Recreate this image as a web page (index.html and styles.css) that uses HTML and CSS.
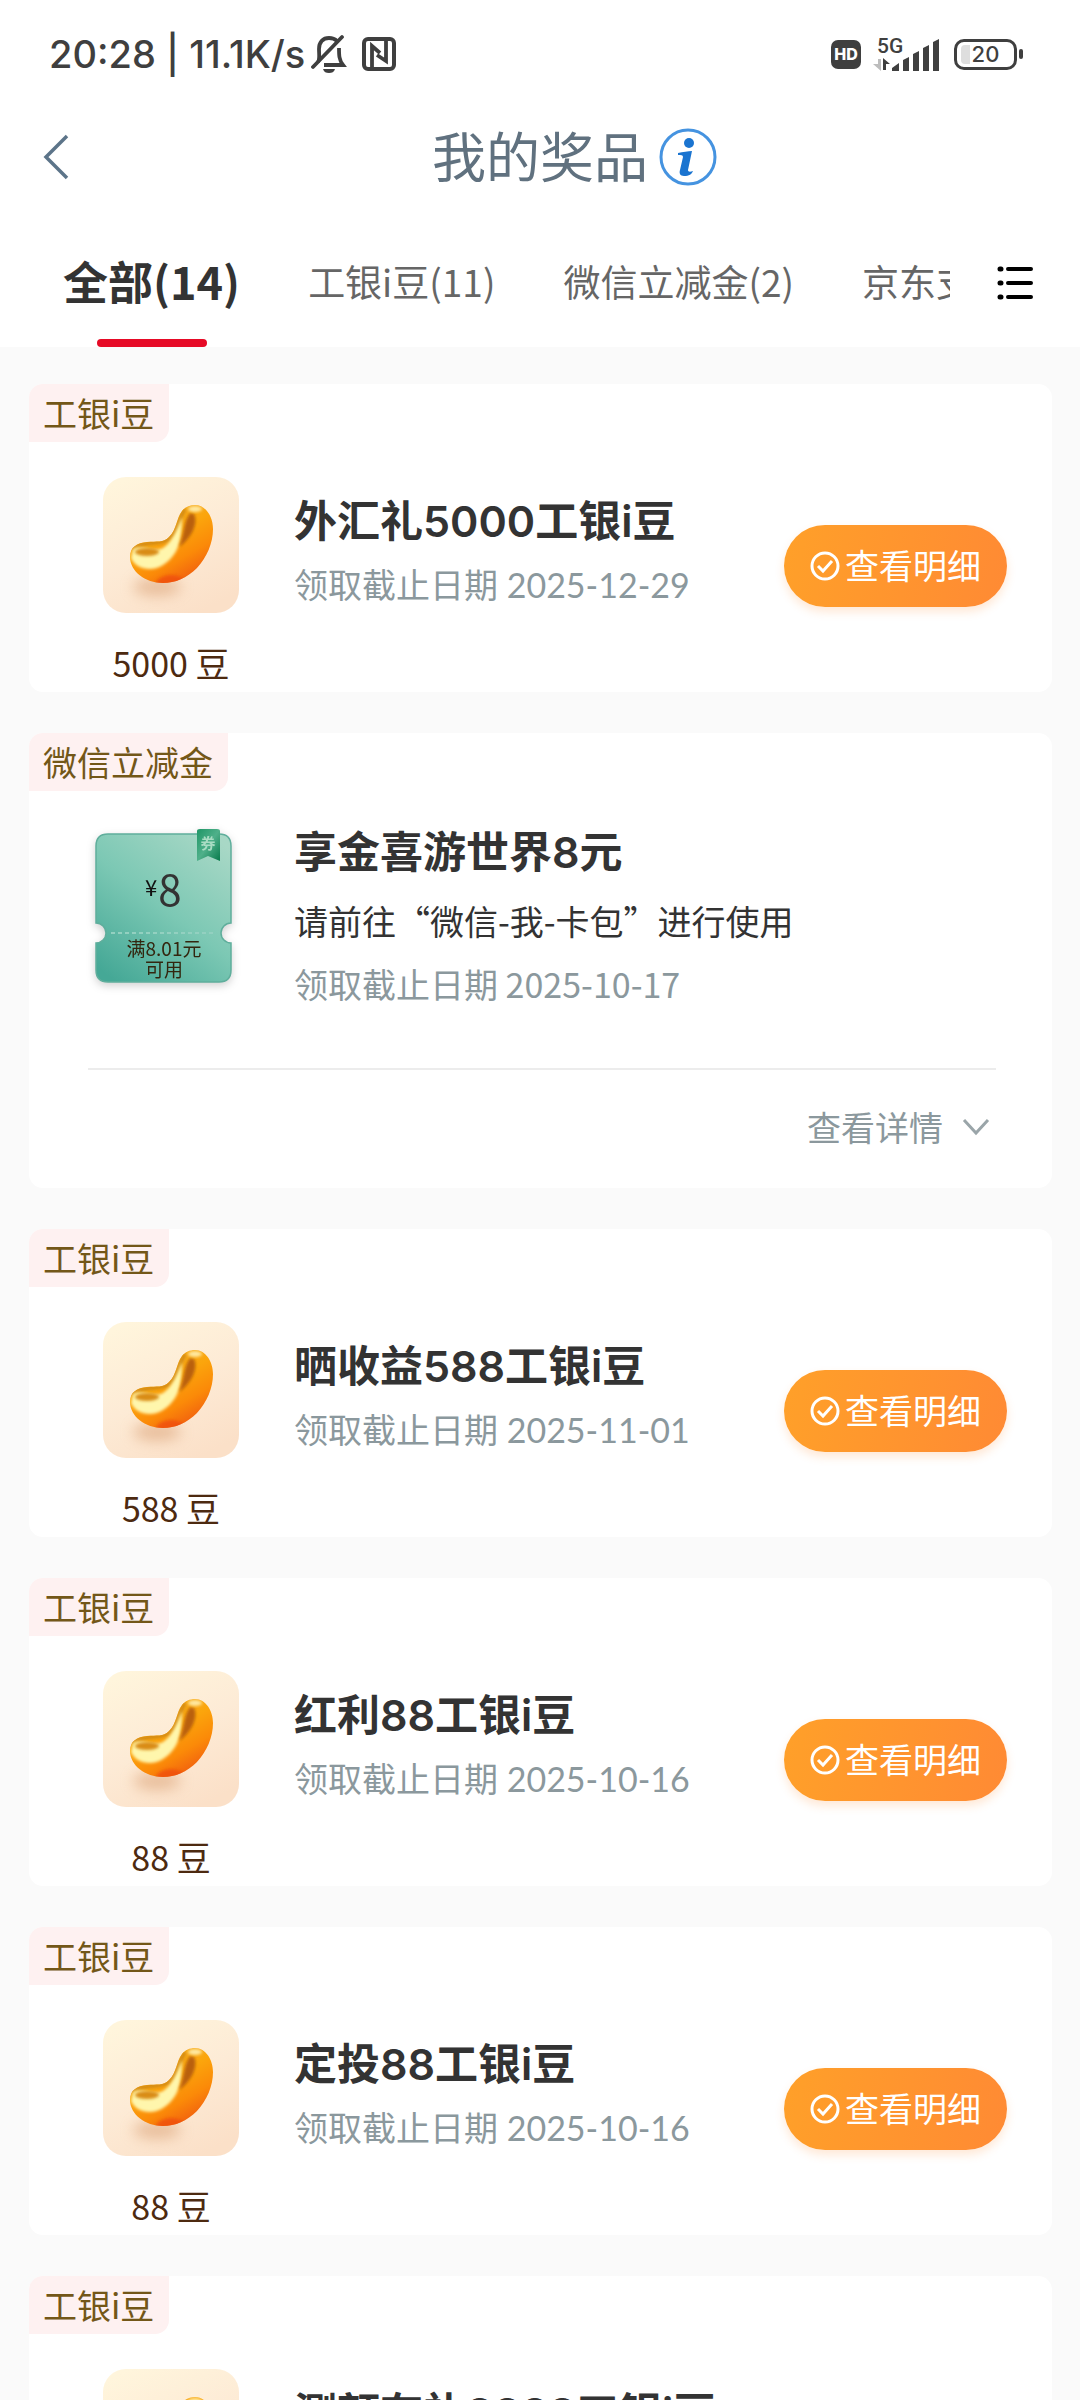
FILE: index.html
```html
<!DOCTYPE html>
<html lang="zh-CN">
<head>
    <meta charset="UTF-8">
    <meta name="viewport" content="width=device-width, initial-scale=1.0">
    <title>我的奖品</title>
    <link rel="stylesheet" href="styles.css">
</head>
<body>
    <!-- 公用图形 -->
    <svg class="sprite" aria-hidden="true">
        <defs>
            <linearGradient id="tileFill" x1="0.2" y1="0" x2="0.7" y2="1">
                <stop offset="0" stop-color="#fff5dc"/>
                <stop offset="0.5" stop-color="#fdebd6"/>
                <stop offset="1" stop-color="#fbe0c8"/>
            </linearGradient>
            <linearGradient id="beanFill" x1="0.3" y1="0.1" x2="0.75" y2="0.85">
                <stop offset="0" stop-color="#f3b02a"/>
                <stop offset="0.4" stop-color="#fba50c"/>
                <stop offset="0.7" stop-color="#fb8a08"/>
                <stop offset="1" stop-color="#f05a10"/>
            </linearGradient>
            <filter id="soft" x="-30%" y="-30%" width="160%" height="160%">
                <feGaussianBlur stdDeviation="1.4"/>
            </filter>
            <filter id="shade" x="-60%" y="-100%" width="220%" height="300%">
                <feGaussianBlur stdDeviation="7"/>
            </filter>
            <clipPath id="beanClip">
                <path d="M92 28C103 28 110 40 110 52C110 66 104 80 94 91C84 101 72 106 60 106C42 106 27 94 27 80C27 70 34 66 44 65C54 64 60 66 66 60C74 52 73 42 79 34C82 30 87 28 92 28Z"/>
            </clipPath>
        </defs>
        <symbol id="bean" viewBox="0 0 136 136">
            <rect width="136" height="136" rx="23" fill="url(#tileFill)"/>
            <ellipse cx="54" cy="110" rx="24" ry="9" fill="#dba277" opacity="0.6" filter="url(#shade)"/>
            <g clip-path="url(#beanClip)">
                <rect x="20" y="20" width="100" height="95" fill="url(#beanFill)"/>
                <ellipse cx="68" cy="107" rx="15" ry="9" fill="#ee4a10" opacity="0.7" filter="url(#soft)"/>
                <path d="M82 32C74 44 76 54 66 62C58 68 42 63 28 72" fill="none" stroke="#d28a12" stroke-width="4" filter="url(#soft)"/>
                <path d="M28 81C33 93 50 95 60 88C74 79 79 66 79 40C74 52 70 64 60 71C50 76 40 67 30 72Z" fill="#fff6ac" filter="url(#soft)"/>
                <path d="M87 36C80 46 82 56 76 70C88 62 96 46 91 37Z" fill="#b9610a" filter="url(#soft)"/>
                <ellipse cx="44" cy="75" rx="12" ry="4" fill="#d98c13" filter="url(#soft)"/>
                <ellipse cx="92" cy="32" rx="7" ry="3" fill="#ffe9a0" filter="url(#soft)"/>
            </g>
        </symbol>
        <symbol id="check" viewBox="0 0 30 30">
            <circle cx="15" cy="15" r="13" fill="none" stroke="#fff" stroke-width="3"/>
            <path d="M8 15l5 5 9-10" fill="none" stroke="#fff" stroke-width="3"/>
        </symbol>
    </svg>

    <div class="app">
        <div class="status-bar">
            <div class="status-left">
                <span>20:28 | 11.1K/s</span>
                <svg class="bell-icon" width="36" height="40" viewBox="0 0 36 40" fill="none" stroke="#3f3f3f" stroke-width="3.8">
                    <path d="M7 28C9 25 8 20 8 15C8 8 12 4 18 4C21 4 24 5 26 7"/>
                    <path d="M28 14C28 21 28 26 32 31H13"/>
                    <path d="M2 33L31 3" stroke-linecap="round"/>
                    <path d="M12 35H24C23 38 21 39 18 39S13 38 12 35Z" fill="#3f3f3f" stroke="none"/>
                </svg>
                <svg width="34" height="34" viewBox="0 0 34 34" fill="none" stroke="#3f3f3f" stroke-width="4">
                    <rect x="2" y="2" width="30" height="30" rx="4"/>
                    <path d="M10 30V9L18 16" stroke-width="3.8"/>
                    <path d="M24 4V24L15 18" stroke-width="3.8"/>
                </svg>
            </div>
            <div class="status-right">
                <div class="hd">HD</div>
                <svg class="signal-icon" width="68" height="40" viewBox="0 0 68 40">
                    <text class="signal-text" x="4" y="19">5G</text>
                    <path d="M5 25H8V37L0 30H5Z" fill="#bdbdbd"/>
                    <path d="M10 36V24L17 30H13V36Z" fill="#3f3f3f"/>
                    <path d="M19 37V34L26 29V37ZM30 37V26L36 23V37ZM40 37V20L46 17V37ZM50 37V14L56 11V37ZM60 37V8L66 5V37Z" fill="#3f3f3f"/>
                </svg>
                <div class="battery"><span class="battery-level"></span>20</div>
                <span class="battery-nub"></span>
            </div>
        </div>

        <header class="header">
            <button class="back" aria-label="返回">
                <svg width="28" height="48" viewBox="0 0 28 48" fill="none" stroke="#5c7489" stroke-width="3.5">
                    <path d="M25 3L4 24L25 45"/>
                </svg>
            </button>
            <h1 class="page-title">我的奖品</h1>
            <button class="info" aria-label="说明">
                <svg width="58" height="58" viewBox="0 0 58 58">
                    <circle cx="29" cy="29" r="27" fill="none" stroke="#4593e0" stroke-width="3"/>
                    <circle cx="30" cy="15" r="5" fill="#1a74d0"/>
                    <path d="M19 25C24 24 29 23 33 23L29 42C29 44 31 44 34 43C33 46 30 48 25 48C21 48 20 45 21 42L24 29C24 27 22 27 19 27Z" fill="#1a74d0"/>
                </svg>
            </button>
        </header>

        <nav class="tabs">
            <div class="tab-scroll">
                <button class="tab active">全部(14)</button>
                <button class="tab">工银i豆(11)</button>
                <button class="tab">微信立减金(2)</button>
                <button class="tab">京东支付(1)</button>
            </div>
            <button class="tab-menu" aria-label="全部分类">
                <svg width="38" height="36" viewBox="0 0 38 36" fill="none" stroke="#000" stroke-width="4" stroke-linecap="round">
                    <path d="M12 4H35M12 18H35M12 32H35"/>
                    <path d="M4 4H5M4 18H5M4 32H5" stroke-width="5"/>
                </svg>
            </button>
        </nav>

        <main class="list">
            <article class="card">
                <div class="tag">工银i豆</div>
                <div class="prize">
                    <div class="thumb">
                        <svg class="bean"><use href="#bean"/></svg>
                        <span>5000 豆</span>
                    </div>
                    <div class="prize-info">
                        <h2>外汇礼5000工银i豆</h2>
                        <p class="deadline">领取截止日期 2025-12-29</p>
                    </div>
                    <button class="detail-button"><svg width="30" height="30"><use href="#check"/></svg><span>查看明细</span></button>
                </div>
            </article>

            <article class="card">
                <div class="tag">微信立减金</div>
                <div class="prize coupon">
                    <svg class="ticket" width="137" height="154" viewBox="0 0 137 154">
                        <defs>
                            <linearGradient id="ticketFill" x1="0.85" y1="0" x2="0.15" y2="1">
                                <stop offset="0" stop-color="#a8d8c6"/>
                                <stop offset="0.5" stop-color="#7cc8b4"/>
                                <stop offset="1" stop-color="#45a896"/>
                            </linearGradient>
                            <linearGradient id="ribbonFill" x1="0" y1="0" x2="1" y2="1">
                                <stop offset="0" stop-color="#1f9666"/>
                                <stop offset="0.5" stop-color="#4fb08a"/>
                                <stop offset="1" stop-color="#087a4c"/>
                            </linearGradient>
                        </defs>
                        <path d="M13 5H124Q136 5 136 17V94A10 10 0 0 0 136 114V141Q136 153 124 153H13Q1 153 1 141V114A10 10 0 0 0 1 94V17Q1 5 13 5Z" fill="url(#ticketFill)" stroke="#5fae9c" stroke-width="1.5"/>
                        <path d="M16 104H121" stroke="#93d0c0" stroke-width="2" stroke-dasharray="4 3"/>
                        <path d="M102 2Q102 0 105 0H122Q125 0 125 2V32L113 27L102 32Z" fill="url(#ribbonFill)"/>
                        <text class="ticket-mark" x="113" y="20">券</text>
                        <text class="ticket-sign" x="56" y="67">¥</text>
                        <text class="ticket-value" x="75" y="77">8</text>
                        <text class="ticket-rule" x="69" y="127">满8.01元</text>
                        <text class="ticket-rule" x="69" y="148">可用</text>
                    </svg>
                    <div class="prize-info">
                        <h2>享金喜游世界8元</h2>
                        <p class="usage">请前往“微信-我-卡包”进行使用</p>
                        <p class="deadline">领取截止日期 2025-10-17</p>
                    </div>
                </div>
                <div class="card-footer">
                    <button class="more">查看详情
                        <svg width="28" height="18" viewBox="0 0 28 18" fill="none" stroke="#9aa5a9" stroke-width="3">
                            <path d="M2 2L14 15L26 2"/>
                        </svg>
                    </button>
                </div>
            </article>

            <article class="card">
                <div class="tag">工银i豆</div>
                <div class="prize">
                    <div class="thumb">
                        <svg class="bean"><use href="#bean"/></svg>
                        <span>588 豆</span>
                    </div>
                    <div class="prize-info">
                        <h2>晒收益588工银i豆</h2>
                        <p class="deadline">领取截止日期 2025-11-01</p>
                    </div>
                    <button class="detail-button"><svg width="30" height="30"><use href="#check"/></svg><span>查看明细</span></button>
                </div>
            </article>

            <article class="card">
                <div class="tag">工银i豆</div>
                <div class="prize">
                    <div class="thumb">
                        <svg class="bean"><use href="#bean"/></svg>
                        <span>88 豆</span>
                    </div>
                    <div class="prize-info">
                        <h2>红利88工银i豆</h2>
                        <p class="deadline">领取截止日期 2025-10-16</p>
                    </div>
                    <button class="detail-button"><svg width="30" height="30"><use href="#check"/></svg><span>查看明细</span></button>
                </div>
            </article>

            <article class="card">
                <div class="tag">工银i豆</div>
                <div class="prize">
                    <div class="thumb">
                        <svg class="bean"><use href="#bean"/></svg>
                        <span>88 豆</span>
                    </div>
                    <div class="prize-info">
                        <h2>定投88工银i豆</h2>
                        <p class="deadline">领取截止日期 2025-10-16</p>
                    </div>
                    <button class="detail-button"><svg width="30" height="30"><use href="#check"/></svg><span>查看明细</span></button>
                </div>
            </article>

            <article class="card">
                <div class="tag">工银i豆</div>
                <div class="prize">
                    <div class="thumb">
                        <svg class="bean"><use href="#bean"/></svg>
                    </div>
                    <div class="prize-info">
                        <h2>测额有礼8888工银i豆</h2>
                    </div>
                </div>
            </article>
        </main>
    </div>
</body>
</html>
```

FILE: styles.css
```css
* {
    margin: 0;
    padding: 0;
    box-sizing: border-box;
}

body {
    background-color: #fafafa;
    color: #333;
    font-family: "Noto Sans CJK SC", sans-serif;
    font-size: 34px;
}

button {
    border: none;
    background: none;
    color: inherit;
    font: inherit;
    cursor: pointer;
}

svg {
    display: block;
    flex-shrink: 0;
}

.sprite {
    position: absolute;
    width: 0;
    height: 0;
}

.app {
    height: 100vh;
    display: flex;
    flex-direction: column;
    overflow: hidden;
}

/* 状态栏 */
.status-bar {
    height: 108px;
    padding: 0 57px 0 49px;
    display: flex;
    flex-shrink: 0;
    justify-content: space-between;
    align-items: center;
    background-color: #fff;
    color: #3f3f3f;
    font-family: Inter, sans-serif;
    font-size: 38px;
    font-weight: 500;
}

.status-left,
.status-right {
    display: flex;
    align-items: center;
}

.bell-icon {
    margin: 0 15px 0 6px;
}

.hd {
    width: 30px;
    height: 29px;
    border-radius: 7px;
    background-color: #3f3f3f;
    color: #fff;
    font-size: 16px;
    font-weight: 800;
    line-height: 29px;
    text-align: center;
}

.signal-icon {
    margin: 0 13px 0 12px;
    overflow: visible;
}

.signal-text {
    font-family: Roboto, sans-serif;
    font-size: 21px;
    fill: #3f3f3f;
}

.battery {
    position: relative;
    width: 63px;
    height: 31px;
    border: 3px solid #3f3f3f;
    border-radius: 10px;
    font-size: 22px;
    line-height: 25px;
    text-align: center;
}

.battery-level {
    position: absolute;
    left: 4px;
    top: 3px;
    width: 9px;
    height: 19px;
    border-radius: 4px 0 0 4px;
    background-color: #dedede;
}

.battery-nub {
    width: 4px;
    height: 10px;
    margin-left: 2px;
    border-radius: 2px;
    background-color: #3f3f3f;
}

/* 标题栏 */
.header {
    height: 98px;
    display: grid;
    grid-template-columns: 1fr auto 1fr;
    flex-shrink: 0;
    align-items: center;
    background-color: #fff;
}

.back {
    justify-self: start;
    padding-left: 42px;
}

.page-title {
    padding-bottom: 4px;
    color: #60717f;
    font-size: 54px;
    font-weight: 400;
    line-height: 94px;
}

.info {
    justify-self: start;
    padding-left: 11px;
}

/* 分类标签 */
.tabs {
    height: 141px;
    padding: 0 46px 0 63px;
    display: flex;
    flex-shrink: 0;
    background-color: #fff;
}

.tab-scroll {
    flex: 1;
    display: flex;
    gap: 68px;
    overflow: hidden;
}

.tab {
    display: flex;
    flex-direction: column;
    flex-shrink: 0;
    align-items: center;
    padding-top: 41px;
    color: #666;
    font-size: 37px;
    line-height: 68px;
    white-space: nowrap;
}

.tab.active {
    color: #333;
    font-size: 45px;
    font-weight: 700;
}

.tab.active::after {
    content: "";
    width: 110px;
    height: 8px;
    margin-top: 24px;
    border-radius: 4px;
    background-color: #e60a26;
}

.tab-menu {
    margin-left: 46px;
    padding-top: 12px;
}

/* 奖品列表 */
.list {
    flex: 1;
    padding: 37px 28px 37px 29px;
    display: flex;
    flex-direction: column;
    gap: 41px;
    overflow: hidden;
}

.card {
    flex-shrink: 0;
    border-radius: 14px;
    background-color: #fff;
}

.tag {
    width: fit-content;
    padding: 0 15px 0 14px;
    border-radius: 14px 0 14px 0;
    background-color: #fef1f1;
    color: #735718;
    line-height: 58px;
}

.prize {
    display: flex;
    align-items: flex-start;
    padding: 35px 45px 6px 74px;
}

.thumb {
    width: 136px;
    color: #4d2a10;
    line-height: 46px;
    text-align: center;
}

.bean {
    width: 136px;
    height: 136px;
    margin-bottom: 27px;
}

.prize-info {
    flex: 1;
    padding: 14px 0 0 55px;
}

.prize-info h2 {
    font-family: Inter, "Noto Sans CJK SC", sans-serif;
    font-size: 43px;
    font-weight: 600;
    line-height: 60px;
}

.deadline {
    margin-top: 10px;
    color: #8b989d;
    font-family: Lato, "Noto Sans CJK SC", sans-serif;
    line-height: 48px;
}

.detail-button {
    height: 82px;
    margin-top: 48px;
    padding: 0 26px;
    display: flex;
    align-items: center;
    gap: 5px;
    border-radius: 41px;
    background: linear-gradient(100deg, #ffa029, #ff8a34);
    box-shadow: 0 5px 10px rgba(255, 140, 50, 0.2);
    color: #fff;
}

.detail-button span {
    padding-bottom: 4px;
}

/* 立减金 */
.coupon {
    padding: 31px 56px 60px 66px;
}

.coupon .prize-info {
    padding: 0 0 0 62px;
}

.ticket {
    margin-top: 7px;
    filter: drop-shadow(0 3px 4px rgba(0, 0, 0, 0.18));
}

.ticket text {
    text-anchor: middle;
}

.ticket-mark {
    fill: #a9dcc3;
    font-size: 15px;
    font-weight: 700;
}

.ticket-sign {
    fill: #111;
    font-size: 22px;
}

.ticket-value {
    fill: #333;
    font-size: 42px;
}

.ticket-rule {
    fill: #33260f;
    font-size: 19px;
}

.usage {
    margin-top: 15px;
    line-height: 48px;
}

.usage + .deadline {
    margin-top: 15px;
    font-family: inherit;
}

.card-footer {
    margin: 0 56px 0 59px;
    padding-bottom: 4px;
    border-top: 2px solid #ececec;
    display: flex;
    justify-content: flex-end;
}

.more {
    display: flex;
    align-items: center;
    gap: 19px;
    padding-right: 6px;
    color: #8b989d;
    line-height: 114px;
}
```
